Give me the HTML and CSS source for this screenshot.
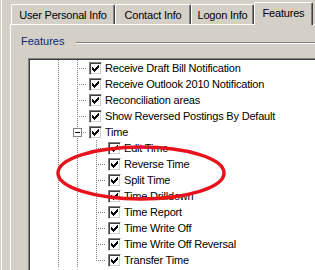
FILE: index.html
```html
<!DOCTYPE html>
<html lang="en">
<head>
    <meta charset="UTF-8">
    <meta name="viewport" content="width=device-width, initial-scale=1.0">
    <title>Features</title>
    <link rel="stylesheet" href="styles.css">
</head>
<body>
    <div class="window">
        <!-- tab strip -->
        <div class="tabs">
            <div class="tab tab-user">User Personal Info</div>
            <div class="tab tab-contact">Contact Info</div>
            <div class="tab tab-logon">Logon Info</div>
            <div class="tab tab-active">Features</div>
        </div>

        <div class="page">
            <div class="group-title">
                <span class="group-text">Features</span>
                <span class="rule"></span>
            </div>

            <!-- feature tree -->
            <div class="tree">
                <div class="row"><span class="g"></span><span class="g tee"></span><span class="cb"><svg viewBox="0 0 7 7"><path d="M6 0h1v1h-1zM5 1h2v1h-2zM0 2h1v1h-1zM4 2h3v1h-3zM0 3h2v1h-2zM3 3h3v1h-3zM0 4h5v1h-5zM1 5h3v1h-3zM2 6h1v1h-1z"/></svg></span><span class="label">Receive Draft Bill Notification</span></div>
                <div class="row"><span class="g"></span><span class="g tee"></span><span class="cb"><svg viewBox="0 0 7 7"><path d="M6 0h1v1h-1zM5 1h2v1h-2zM0 2h1v1h-1zM4 2h3v1h-3zM0 3h2v1h-2zM3 3h3v1h-3zM0 4h5v1h-5zM1 5h3v1h-3zM2 6h1v1h-1z"/></svg></span><span class="label">Receive Outlook 2010 Notification</span></div>
                <div class="row"><span class="g"></span><span class="g tee"></span><span class="cb"><svg viewBox="0 0 7 7"><path d="M6 0h1v1h-1zM5 1h2v1h-2zM0 2h1v1h-1zM4 2h3v1h-3zM0 3h2v1h-2zM3 3h3v1h-3zM0 4h5v1h-5zM1 5h3v1h-3zM2 6h1v1h-1z"/></svg></span><span class="label">Reconciliation areas</span></div>
                <div class="row"><span class="g"></span><span class="g tee"></span><span class="cb"><svg viewBox="0 0 7 7"><path d="M6 0h1v1h-1zM5 1h2v1h-2zM0 2h1v1h-1zM4 2h3v1h-3zM0 3h2v1h-2zM3 3h3v1h-3zM0 4h5v1h-5zM1 5h3v1h-3zM2 6h1v1h-1z"/></svg></span><span class="label">Show Reversed Postings By Default</span></div>
                <div class="row"><span class="g"></span><span class="g tee"><span class="toggle"></span></span><span class="cb"><svg viewBox="0 0 7 7"><path d="M6 0h1v1h-1zM5 1h2v1h-2zM0 2h1v1h-1zM4 2h3v1h-3zM0 3h2v1h-2zM3 3h3v1h-3zM0 4h5v1h-5zM1 5h3v1h-3zM2 6h1v1h-1z"/></svg></span><span class="label">Time</span></div>
                <div class="row"><span class="g"></span><span class="g"></span><span class="g tee"></span><span class="cb"><svg viewBox="0 0 7 7"><path d="M6 0h1v1h-1zM5 1h2v1h-2zM0 2h1v1h-1zM4 2h3v1h-3zM0 3h2v1h-2zM3 3h3v1h-3zM0 4h5v1h-5zM1 5h3v1h-3zM2 6h1v1h-1z"/></svg></span><span class="label">Edit Time</span></div>
                <div class="row"><span class="g"></span><span class="g"></span><span class="g tee"></span><span class="cb"><svg viewBox="0 0 7 7"><path d="M6 0h1v1h-1zM5 1h2v1h-2zM0 2h1v1h-1zM4 2h3v1h-3zM0 3h2v1h-2zM3 3h3v1h-3zM0 4h5v1h-5zM1 5h3v1h-3zM2 6h1v1h-1z"/></svg></span><span class="label">Reverse Time</span></div>
                <div class="row"><span class="g"></span><span class="g"></span><span class="g tee"></span><span class="cb"><svg viewBox="0 0 7 7"><path d="M6 0h1v1h-1zM5 1h2v1h-2zM0 2h1v1h-1zM4 2h3v1h-3zM0 3h2v1h-2zM3 3h3v1h-3zM0 4h5v1h-5zM1 5h3v1h-3zM2 6h1v1h-1z"/></svg></span><span class="label">Split Time</span></div>
                <div class="row"><span class="g"></span><span class="g"></span><span class="g tee"></span><span class="cb"><svg viewBox="0 0 7 7"><path d="M6 0h1v1h-1zM5 1h2v1h-2zM0 2h1v1h-1zM4 2h3v1h-3zM0 3h2v1h-2zM3 3h3v1h-3zM0 4h5v1h-5zM1 5h3v1h-3zM2 6h1v1h-1z"/></svg></span><span class="label">Time Drilldown</span></div>
                <div class="row"><span class="g"></span><span class="g"></span><span class="g tee"></span><span class="cb"><svg viewBox="0 0 7 7"><path d="M6 0h1v1h-1zM5 1h2v1h-2zM0 2h1v1h-1zM4 2h3v1h-3zM0 3h2v1h-2zM3 3h3v1h-3zM0 4h5v1h-5zM1 5h3v1h-3zM2 6h1v1h-1z"/></svg></span><span class="label">Time Report</span></div>
                <div class="row"><span class="g"></span><span class="g"></span><span class="g tee"></span><span class="cb"><svg viewBox="0 0 7 7"><path d="M6 0h1v1h-1zM5 1h2v1h-2zM0 2h1v1h-1zM4 2h3v1h-3zM0 3h2v1h-2zM3 3h3v1h-3zM0 4h5v1h-5zM1 5h3v1h-3zM2 6h1v1h-1z"/></svg></span><span class="label">Time Write Off</span></div>
                <div class="row"><span class="g"></span><span class="g"></span><span class="g tee"></span><span class="cb"><svg viewBox="0 0 7 7"><path d="M6 0h1v1h-1zM5 1h2v1h-2zM0 2h1v1h-1zM4 2h3v1h-3zM0 3h2v1h-2zM3 3h3v1h-3zM0 4h5v1h-5zM1 5h3v1h-3zM2 6h1v1h-1z"/></svg></span><span class="label">Time Write Off Reversal</span></div>
                <div class="row"><span class="g"></span><span class="g"></span><span class="end"></span><span class="cb"><svg viewBox="0 0 7 7"><path d="M6 0h1v1h-1zM5 1h2v1h-2zM0 2h1v1h-1zM4 2h3v1h-3zM0 3h2v1h-2zM3 3h3v1h-3zM0 4h5v1h-5zM1 5h3v1h-3zM2 6h1v1h-1z"/></svg></span><span class="label">Transfer Time</span></div>
            </div>
        </div>
    </div>

    <!-- red marker drawn over the screenshot -->
    <svg class="marker" width="315" height="270" viewBox="0 0 315 270">
        <ellipse cx="141" cy="173" rx="83" ry="26" fill="none" stroke="#e8121c" stroke-width="3.5"/>
    </svg>
</body>
</html>
```

FILE: styles.css
```css
body {
    margin: 0;
    width: 315px;
    height: 270px;
    overflow: hidden;
    background: #d4d0c8;
    font-family: "Liberation Sans", Arial, sans-serif;
    font-size: 11px;
    color: #000;
}
.window {
    margin-left: 1px;
    height: 270px;
    border-left: 1px solid #fff;
    padding-left: 8px;
}

/* tabs */
.tabs {
    display: flex;
    align-items: flex-end;
    height: 24px;
    padding-left: 1px;
}
.tab {
    box-sizing: border-box;
    height: 20px;
    line-height: 20px;
    text-align: center;
    border-top: 1px solid #fff;
    border-left: 1px solid #fff;
    border-right: 1px solid #404040;
    border-radius: 2px 2px 0 0;
    box-shadow: inset -1px 0 0 #808080;
    letter-spacing: -0.2px;
    white-space: nowrap;
}
.tab-user { width: 104px; }
.tab-contact { width: 76px; }
.tab-logon { width: 63px; }
.tab-active {
    position: relative;
    width: 59px;
    height: 23px;
    line-height: 20px;
    margin-bottom: -1px;
    background: #d4d0c8;
}

/* page */
.page {
    border-top: 1px solid #fff;
    border-left: 1px solid #fff;
    height: 245px;
    overflow: hidden;
}
.group-title {
    display: flex;
    align-items: flex-start;
    padding: 10px 0 0 10px;
    height: 13px;
    line-height: 13px;
}
.group-text {
    color: #0b2a7a;
}
.rule {
    flex: 1;
    height: 0;
    margin: 7px 0 0 12px;
    border-top: 1px solid #808080;
    border-bottom: 1px solid #fff;
}

/* tree */
.tree {
    margin: 10px 0 0 17px;
    width: 300px;
    height: 210px;
    overflow: hidden;
    padding: 1px 0 0 1px;
    background: #fff;
    border-top: 1px solid #808080;
    border-left: 1px solid #808080;
    box-shadow: inset 1px 1px 0 #404040;
}
.row {
    display: flex;
    align-items: center;
    height: 16px;
    padding-left: 19px;
}
.g, .end {
    display: flex;
    align-items: center;
    width: 19px;
    height: 16px;
    flex: none;
    background-image: repeating-linear-gradient(to bottom, #808080 0 1px, transparent 1px 2px);
    background-size: 1px 16px;
    background-position: 9px 0;
    background-repeat: no-repeat;
}
.tee {
    background-image:
        repeating-linear-gradient(to bottom, #808080 0 1px, transparent 1px 2px),
        repeating-linear-gradient(to right, #808080 0 1px, transparent 1px 2px);
    background-size: 1px 16px, 9px 1px;
    background-position: 9px 0, 11px 8px;
}
.end {
    background-image:
        repeating-linear-gradient(to bottom, #808080 0 1px, transparent 1px 2px),
        repeating-linear-gradient(to right, #808080 0 1px, transparent 1px 2px);
    background-size: 1px 9px, 9px 1px;
    background-position: 9px 0, 11px 8px;
}
.toggle {
    box-sizing: border-box;
    width: 9px;
    height: 9px;
    margin-left: 5px;
    border: 1px solid #808080;
    background: #fff linear-gradient(#000, #000) no-repeat 1px 3px / 5px 1px;
}
.cb {
    box-sizing: border-box;
    flex: none;
    width: 13px;
    height: 13px;
    margin-left: 2px;
    padding: 2px;
    background: #fff;
    border: 1px solid;
    border-color: #808080 #fff #fff #808080;
    box-shadow: inset 1px 1px 0 #404040, inset -1px -1px 0 #d4d0c8;
}
.cb svg {
    display: block;
    width: 7px;
    height: 7px;
    shape-rendering: crispEdges;
}
.label {
    margin-left: 3px;
    line-height: 16px;
    white-space: nowrap;
    letter-spacing: -0.2px;
}

.marker {
    position: absolute;
    left: 0;
    top: 0;
}
```
